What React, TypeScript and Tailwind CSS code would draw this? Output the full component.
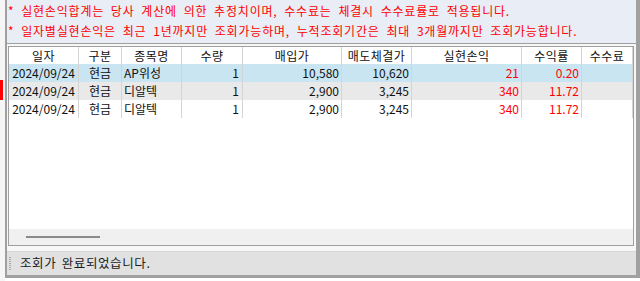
import React from "react";

const cols = [
  { name: "일자", w: 70 },
  { name: "구분", w: 43 },
  { name: "종목명", w: 60 },
  { name: "수량", w: 61 },
  { name: "매입가", w: 99 },
  { name: "매도체결가", w: 70 },
  { name: "실현손익", w: 110 },
  { name: "수익률", w: 60 },
  { name: "수수료", w: 51 },
];

const rows = [
  { bg: "bg-[#c9e5f1]", d: ["2024/09/24", "현금", "AP위성", "1", "10,580", "10,620", "21", "0.20", ""] },
  { bg: "bg-[#e9e9e9]", d: ["2024/09/24", "현금", "디알텍", "1", "2,900", "3,245", "340", "11.72", ""] },
  { bg: "bg-white", d: ["2024/09/24", "현금", "디알텍", "1", "2,900", "3,245", "340", "11.72", ""] },
];

const align = ["justify-center", "justify-center", "justify-start pl-[2px]", "justify-end pr-[3px]", "justify-end pr-[2px]", "justify-end pr-[2px]", "justify-end pr-[2px]", "justify-end pr-[2px]", "justify-end"];

export default function App() {
  return (
    <div
      className="w-[640px] h-[281px] overflow-hidden bg-white flex text-[12px] leading-none"
      style={{ fontFamily: '"Noto Sans CJK KR", "Noto Sans", sans-serif' }}
    >
      <div className="w-[5px] h-full flex flex-col bg-[#f6f6f6]">
        <div className="h-[80px]" />
        <div className="h-[20px] w-[3px] bg-[#ff0000]" />
      </div>
      <div className="flex-1 h-[278px] flex flex-col border-l-2 border-r-4 border-b-[3px] border-[#a0a0a0] bg-[#f7f7f7]">
        <div className="h-[44px] shrink-0 bg-[#e9edf5] border-b border-[#a0a0a0] flex flex-col pl-[1px] pt-[1px] text-[#ff0000] text-[12px] tracking-[0.8px] [word-spacing:3.3px]">
          <div className="h-[20px] flex items-center whitespace-nowrap">* 실현손익합계는 당사 계산에 의한 추정치이며, 수수료는 체결시 수수료률로 적용됩니다.</div>
          <div className="h-[20px] flex items-center whitespace-nowrap">* 일자별실현손익은 최근 1년까지만 조회가능하며, 누적조회기간은 최대 3개월까지만 조회가능합니다.</div>
        </div>
        <div className="mt-[2px] ml-[1px] mr-[2px] h-[200px] shrink-0 border border-[#a0a0a0] bg-white flex flex-col">
          <div className="h-[17px] flex shrink-0 bg-white">
            {cols.map((c) => (
              <div key={c.name} style={{ width: c.w }} className="h-full border-r border-[#d4d4d4] flex items-center justify-center text-[#111] tracking-[0.5px]">
                {c.name}
              </div>
            ))}
          </div>
          {rows.map((r, i) => (
            <div key={i} className={`h-[18px] flex shrink-0 ${r.bg}`}>
              {cols.map((c, j) => (
                <div
                  key={j}
                  style={{ width: c.w }}
                  className={`h-full border-r border-[#d4d4d4] flex items-center ${align[j]} ${j === 6 || j === 7 ? "text-[#ff0000]" : "text-[#111]"}`}
                >
                  {r.d[j]}
                </div>
              ))}
            </div>
          ))}
          <div className="flex-1" />
          <div className="h-[16px] shrink-0 bg-[#f0f0f0] flex items-center pl-[17px]">
            <div className="w-[74px] h-[2px] bg-[#8a8a8a]" />
          </div>
        </div>
        <div className="h-[5px] shrink-0" />
        <div className="flex-1 bg-[#e1e1e1] border-t border-[#d6d6d6] flex items-center">
          <div className="ml-[2px] w-[2px] h-[14px] flex flex-col justify-between">
            {[0, 1, 2, 3, 4, 5, 6].map((k) => (
              <div key={k} className="w-[2px] h-[1px] bg-[#a8a8a8]" />
            ))}
          </div>
          <div className="ml-[9px] text-[#1a1a1a] text-[12.5px] tracking-[0.6px] [word-spacing:2px]">조회가 완료되었습니다.</div>
        </div>
      </div>
    </div>
  );
}
